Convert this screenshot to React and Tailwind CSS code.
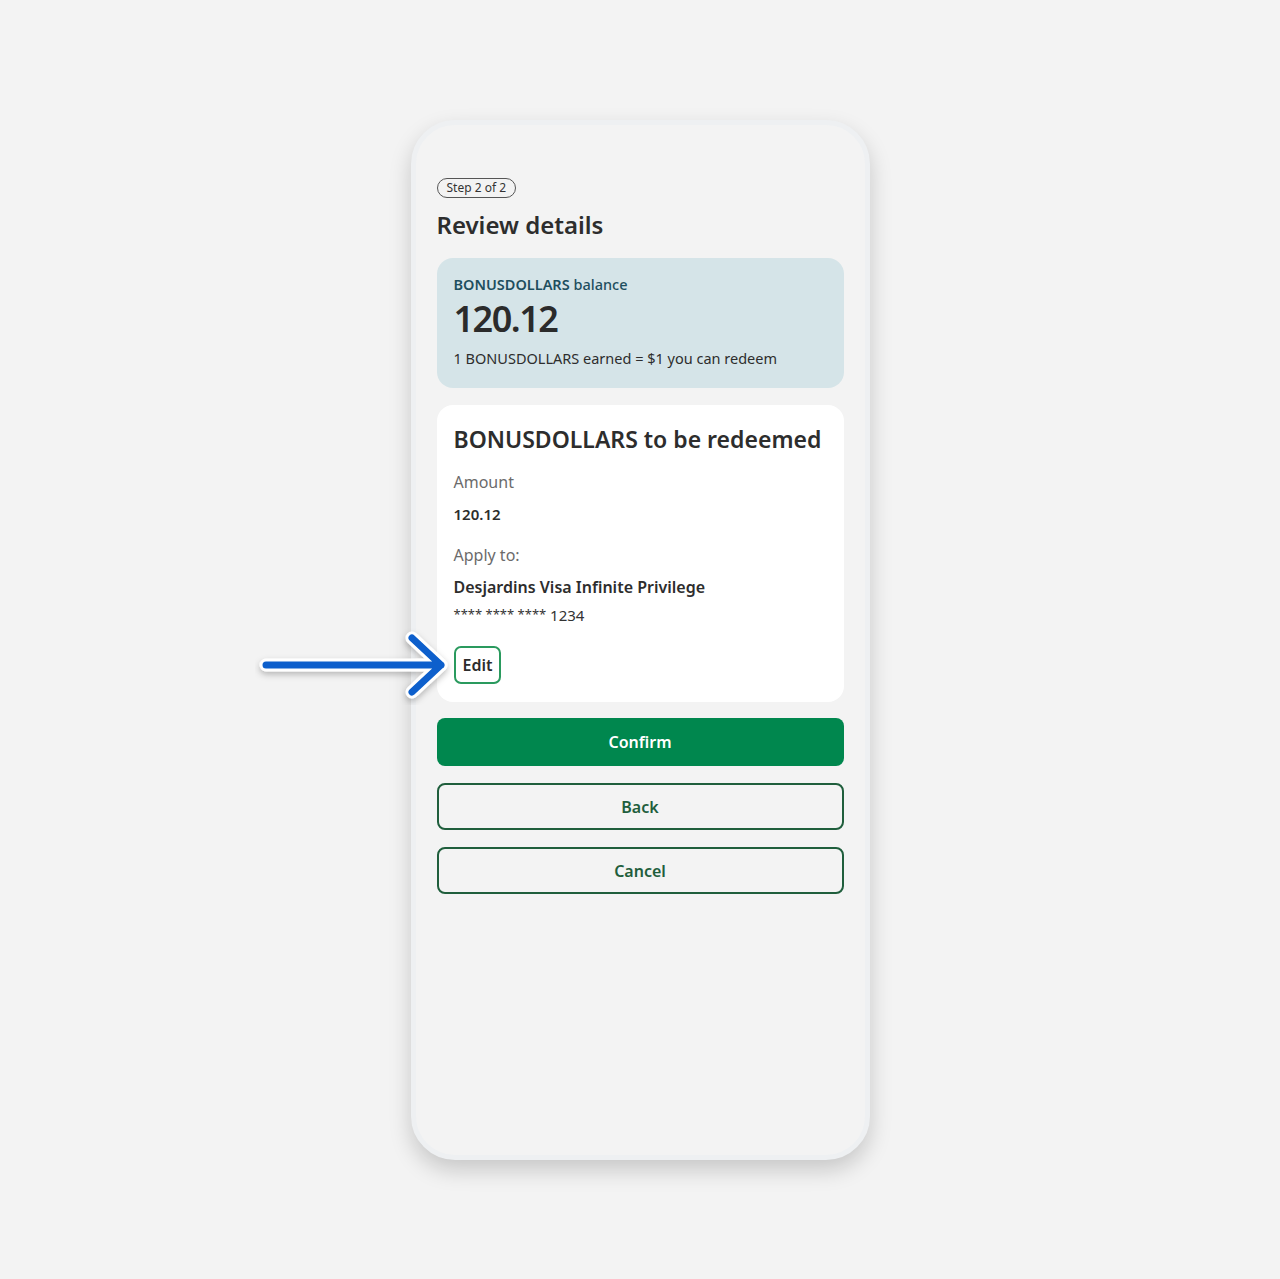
import React from "react";

export default function App() {
  return (
    <div
      className="relative w-[1280px] h-[1279px] bg-[#f3f3f3] overflow-hidden"
      style={{ fontFamily: "'Noto Sans', sans-serif" }}
    >
      <div className="pt-[120px] flex justify-center">
        <div className="w-[459px] h-[1040px] rounded-[44px] bg-[#f3f3f3] border-[5px] border-[#eef0f2] shadow-[0_10px_22px_rgba(0,0,0,0.18)] px-[21px] pt-[53px] flex flex-col">
          <div className="self-start border border-[#555] rounded-full h-[20px] px-[9px] flex items-center text-[12px] text-[#333] leading-none">
            Step 2 of 2
          </div>
          <h1 className="mt-[11px] text-[24px] font-semibold text-[#2d2d2d] leading-[32px]">
            Review details
          </h1>
          <div className="mt-[17px] bg-[#d5e4e8] rounded-[16px] px-[17px] pt-[16px] pb-[20px]">
            <div className="text-[14.5px] font-semibold text-[#1e4e5e] leading-[20px]">
              BONUSDOLLARS <span className="font-medium">balance</span>
            </div>
            <div className="mt-[5px] text-[36px] font-semibold text-[#2b2b2b] leading-[40px] tracking-[-1.5px]">
              120.12
            </div>
            <div className="mt-[9px] text-[14.5px] text-[#2d2d2d] leading-[20px]">
              1 BONUSDOLLARS earned = $1 you can redeem
            </div>
          </div>
          <div className="mt-[17px] bg-white rounded-[16px] px-[17px] pt-[20px] pb-[18px]">
            <div className="text-[23px] font-semibold text-[#2d2d2d] leading-[28px]">
              BONUSDOLLARS to be redeemed
            </div>
            <div className="mt-[17px] text-[16px] text-[#6b6b6b] leading-[24px]">Amount</div>
            <div className="mt-[8px] text-[15px] font-semibold text-[#2d2d2d] leading-[24px]">120.12</div>
            <div className="mt-[17px] text-[16px] text-[#6b6b6b] leading-[24px]">Apply to:</div>
            <div className="mt-[8px] text-[16px] font-semibold text-[#2d2d2d] leading-[24px]">
              Desjardins Visa Infinite Privilege
            </div>
            <div className="mt-[5px] text-[15px] text-[#333] leading-[20px]">
              <span className="text-[13px] align-[2px]">**** **** ****</span> 1234
            </div>
            <button className="mt-[21px] h-[38px] px-[7px] border-2 border-[#2a9a5e] rounded-[7px] bg-white text-[16px] font-semibold text-[#2d2d2d] leading-none">
              Edit
            </button>
          </div>
          <button className="mt-[16px] h-[48px] w-full rounded-[8px] bg-[#00874e] text-white text-[16px] font-semibold">
            Confirm
          </button>
          <button className="mt-[17px] h-[47px] w-full rounded-[8px] border-2 border-[#1f5e3c] text-[#1f5e3c] text-[16px] font-semibold">
            Back
          </button>
          <button className="mt-[17px] h-[47px] w-full rounded-[8px] border-2 border-[#1f5e3c] text-[#1f5e3c] text-[16px] font-semibold">
            Cancel
          </button>
        </div>
      </div>
      <svg
        className="absolute left-[255px] top-[625px]"
        width="200"
        height="80"
        viewBox="0 0 200 80"
        fill="none"
      >
        <defs>
          <filter id="sh" x="-20%" y="-50%" width="140%" height="200%">
            <feDropShadow dx="0" dy="3" stdDeviation="3" floodColor="#000" floodOpacity="0.25" />
          </filter>
        </defs>
        <g filter="url(#sh)" strokeLinecap="round" strokeLinejoin="round">
          <path d="M11 40 H186 M157 13 L186 40 L157 67" stroke="#fff" strokeWidth="13" />
          <path d="M11 40 H186 M157 13 L186 40 L157 67" stroke="#0a5fcc" strokeWidth="7" />
        </g>
      </svg>
    </div>
  );
}
